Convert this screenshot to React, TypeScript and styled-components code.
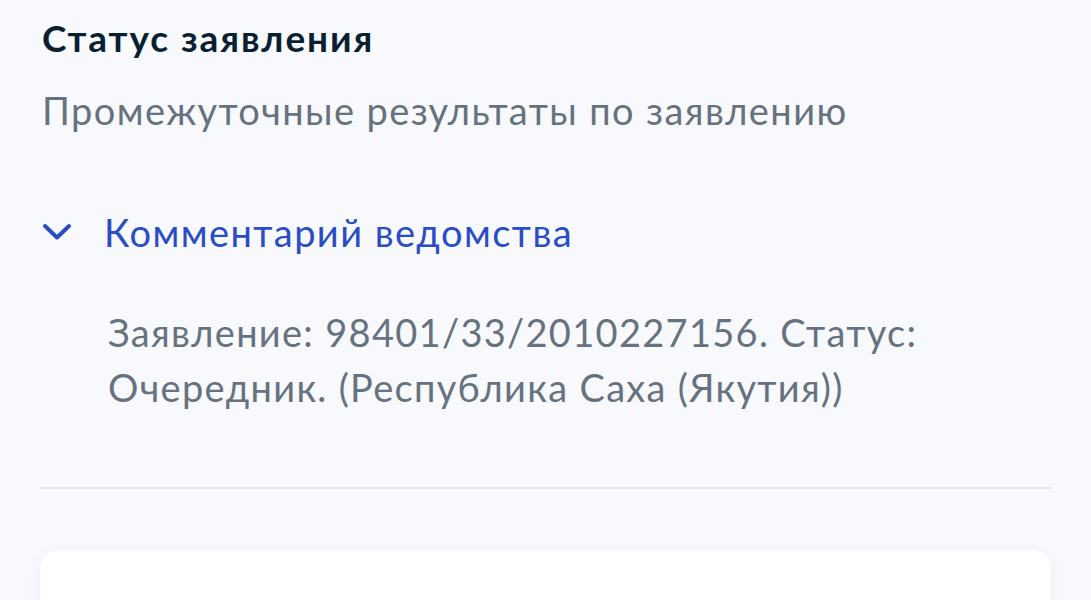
import styled, { createGlobalStyle } from "styled-components";

const GlobalStyle = createGlobalStyle`
	html, body {
		margin: 0;
		padding: 0;
		background: #f8f9fc;
		font-family: Lato, "Noto Sans", sans-serif;
	}
`;

const Page = styled.div`
	width: 1091px;
	height: 600px;
	overflow: hidden;
	padding: 14px 40px 0 40px;
	box-sizing: border-box;
	background: #f8f9fc;
`;

const Title = styled.h2`
	margin: 0;
	padding-left: 2px;
	font-size: 37px;
	line-height: 48px;
	letter-spacing: 1.9px;
	font-weight: 700;
	color: #0b1f33;
`;

const Subtitle = styled.p`
	margin: 24px 0 0;
	padding-left: 2px;
	font-size: 38px;
	line-height: 48px;
	letter-spacing: 1.4px;
	color: #66727f;
`;

const Toggle = styled.button`
	display: flex;
	align-items: center;
	gap: 32px;
	margin: 74px 0 0;
	padding: 0 0 0 2px;
	border: none;
	background: none;
	font-family: inherit;
	font-size: 38px;
	line-height: 48px;
	letter-spacing: 1.45px;
	color: #2a4cc6;
	cursor: pointer;
`;

const Comment = styled.p`
	margin: 49px 0 0;
	padding-left: 68px;
	font-size: 38px;
	line-height: 55px;
	letter-spacing: 1.3px;
	color: #66727f;
`;

const Divider = styled.hr`
	margin: 72px 0 0;
	border: none;
	height: 2px;
	background: #e3e6eb;
`;

const Card = styled.div`
	margin-top: 61px;
	height: 120px;
	border-radius: 18px;
	background: #ffffff;
	box-shadow: 0 2px 14px rgba(40, 60, 120, 0.06);
`;

function Chevron() {
	return (
		<svg width="30" height="18" viewBox="0 0 30 18" fill="none">
			<polyline points="3,3 15,14.5 27,3" stroke="#2a4cc6" strokeWidth="4" strokeLinecap="round" strokeLinejoin="round" />
		</svg>
	);
}

export default function App() {
	return (
		<Page>
			<GlobalStyle />
			<Title>Статус заявления</Title>
			<Subtitle>Промежуточные результаты по заявлению</Subtitle>
			<Toggle>
				<Chevron />
				Комментарий ведомства
			</Toggle>
			<Comment>
				Заявление: 98401/33/2010227156. Статус:
				<br />
				Очередник. (Республика Саха (Якутия))
			</Comment>
			<Divider />
			<Card />
		</Page>
	);
}
